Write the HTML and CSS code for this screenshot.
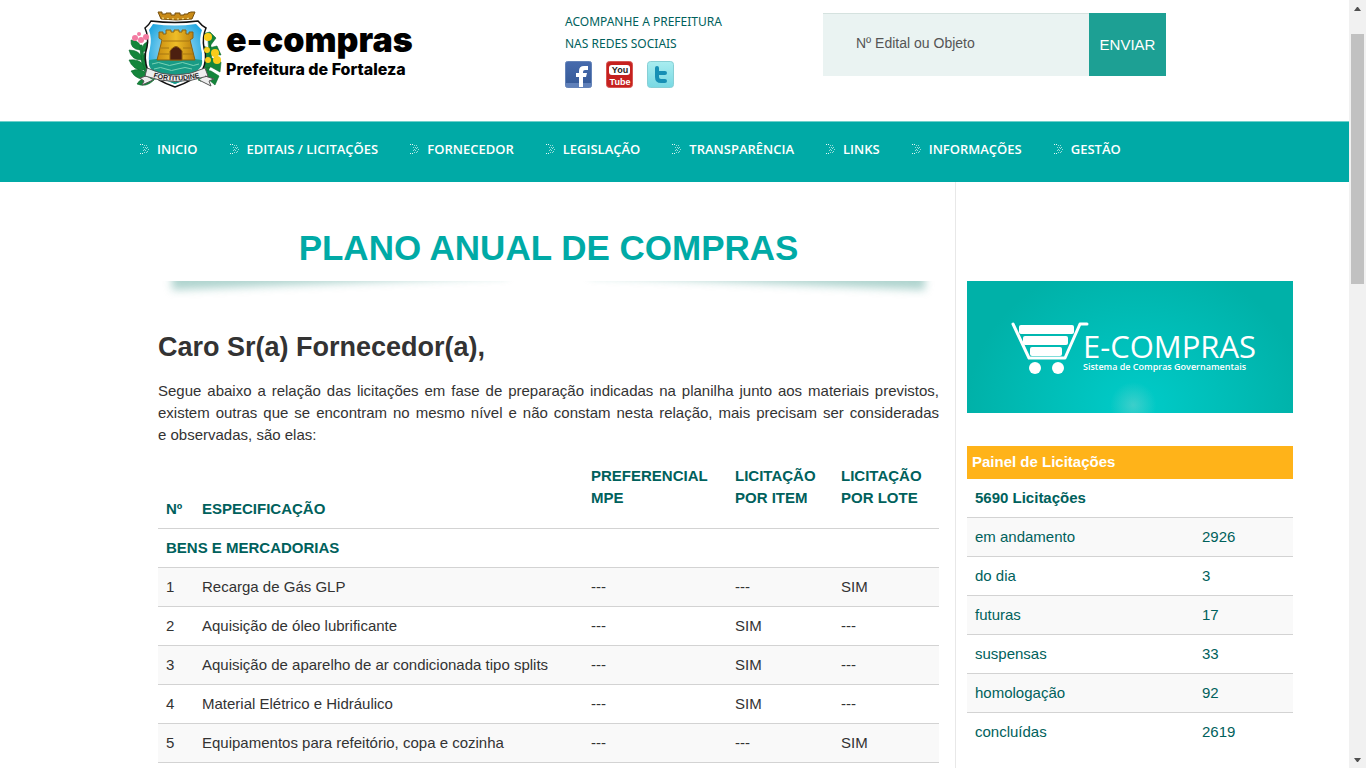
FILE: index.html
```html
<!DOCTYPE html>
<html lang="pt-BR">
<head>
<meta charset="utf-8">
<title>e-compras - Prefeitura de Fortaleza</title>
<link rel="stylesheet" href="styles.css">
</head>
<body>
<svg class="defs" aria-hidden="true">
  <symbol id="arrow" viewBox="0 0 10 11">
    <path d="M0 0h1v1h-1zM2 0h1v1h-1zM0 9h1v1h-1zM2 9h1v1h-1z" opacity=".9"/>
    <path d="M4 1h1v1h-1zM6 1h1v1h-1zM5 3h1v1h-1zM7 3h1v1h-1zM3 3h1v1h-1zM4 5h1v1h-1zM6 4h1v1h-1zM8 5h1v1h-1zM3 6h1v1h-1zM5 6h1v1h-1zM7 7h1v1h-1zM4 8h1v1h-1zM6 8h1v1h-1z" opacity=".6"/>
  </symbol>
</svg>
<div class="shell">
  <div class="page">
    <header class="header">
      <a class="brand" href="#">
        <svg class="crest" viewBox="0 0 94 80" aria-hidden="true">
          <defs>
            <radialGradient id="sky" cx=".5" cy=".45" r=".6"><stop offset="0" stop-color="#c5ecf8"/><stop offset="1" stop-color="#1fa6e0"/></radialGradient>
            <linearGradient id="gold" x1="0" x2="1"><stop offset="0" stop-color="#c98c10"/><stop offset=".5" stop-color="#eebd27"/><stop offset="1" stop-color="#b97c0c"/></linearGradient>
          </defs>
          <g fill="#14853b" stroke="#0c6a2c" stroke-width=".6">
            <path d="M23 70Q12 61 12 35L14 35Q17 58 28 69z"/>
            <path d="M12 40Q2 39 3 30Q14 31 12 40M14 42Q13 32 23 31Q23 41 14 42M14 50Q3 50 1 40Q13 40 14 50M16 50Q14 40 25 39Q25 49 16 50M17 60Q5 61 1 50Q15 48 17 60M19 60Q16 50 25 47Q28 57 19 60M22 68Q9 72 3 61Q15 56 22 68M26 70Q18 78 9 74Q14 65 26 70"/>
            <path d="M70 70Q84 58 80 30L82 30Q88 58 73 71z"/>
            <path d="M81 29L74 24L82 22L88 28L82 36zM81 38L71 35L72 44L78 48L84 44L93 45L89 36zM79 48L70 50L74 59L83 57L92 62L93 52L84 48zM77 60L70 63L72 71L80 69L87 75L91 66L83 61z"/>
          </g>
          <path d="M23 11Q47 14 70 11Q74 16 78 18Q74 27 76 38Q80 49 74 61Q65 71 47 77Q29 71 20 61Q15 48 19 37Q21 27 17 18Q21 15 23 11z" fill="#fff" stroke="#111" stroke-width="1.5"/>
          <path d="M25 14Q47 17 68 14L74 20Q71 28 73 38Q76 49 71 58Q63 68 47 74Q31 68 23 58Q19 49 22 38Q24 28 21 20z" fill="url(#sky)"/>
          <path d="M21 50Q47 45 74 50Q75 55 71 59Q62 69 47 74Q32 69 23 59Q20 55 21 50z" fill="#199b85"/>
          <path d="M24 54q7-3 12 0t12 0t12 0t11 0M26 59q7-3 12 0t12 0t14 0" fill="none" stroke="#79d2b5"/>
          <path d="M29 50L34 30L31 28V22H35V24H38V20H43V22H46V20H51V22H54V20H58V24H61V22H65V28L62 30L67 50z" fill="url(#gold)" stroke="#8a6110"/>
          <path d="M42 50V41Q48 32 54 41V50z" fill="#4c1f10" stroke="#8a5a0c"/>
          <path d="M35 31H61M33 38H41M55 38H63M31 44H41M55 44H65" stroke="#a67612"/>
          <path d="M30 2H34V4H38V3H43V5H47V3H52V5H56V4H60V3L63 2H67L64 9Q48 11 33 9z" fill="#c98b18" stroke="#76500f"/>
          <path d="M34 8Q48 10 63 8" stroke="#fff0a0" fill="none" stroke-dasharray="2 3"/>
          <path d="M19 58Q47 72 77 58L80 66Q47 77 17 66zM18 66L12 68L16 71L14 75L25 70M77 66L86 69L81 71L83 76L71 70" fill="#eee" stroke="#555"/>
          <path id="ribbon" d="M18 65Q48 76 79 65" fill="none"/>
          <text class="motto"><textPath href="#ribbon" startOffset="50%" text-anchor="middle">FORTITUDINE</textPath></text>
          <g fill="#f37ba2"><circle cx="7" cy="28" r="3"/><circle cx="11" cy="24" r="2"/><circle cx="18" cy="27" r="3"/><circle cx="13" cy="30" r="3"/></g>
          <g fill="#f8cc1b"><circle cx="80" cy="27" r="4"/><circle cx="87" cy="43" r="4"/><circle cx="79" cy="40" r="3"/><circle cx="89" cy="50" r="4"/><circle cx="80" cy="50" r="3"/></g>
        </svg>
        <span class="brand-text"><strong>e-compras</strong><b>Prefeitura de Fortaleza</b></span>
      </a>
      <section class="social">
        <p>ACOMPANHE A PREFEITURA<br>NAS REDES SOCIAIS</p>
        <div class="social-links">
          <a href="#" aria-label="Facebook"><svg viewBox="0 0 27 27"><defs><linearGradient id="fb" x2="0" y2="1"><stop stop-color="#476bad"/><stop offset="1" stop-color="#345895"/></linearGradient></defs><rect width="26" height="26" x=".5" y=".5" rx="2" fill="url(#fb)" stroke="#6483b8"/><path d="M1 22H26V26H1z" fill="#5f80b9"/><path d="M14 26V16H11V12H14V10Q14 5 19 5H23V9H20Q18 9 18 11V12H22L21 16H18V26z" fill="#fff"/></svg></a>
          <a href="#" aria-label="YouTube"><svg viewBox="0 0 27 27"><rect width="26" height="26" x=".5" y=".5" rx="3" fill="#c5211f" stroke="#d65552"/><rect x="3" y="4" width="21" height="10" rx="3" fill="#fff"/><text class="yt yt-top" x="14" y="12" text-anchor="middle">You</text><text class="yt" x="14" y="24" text-anchor="middle">Tube</text></svg></a>
          <a href="#" aria-label="Twitter"><svg viewBox="0 0 27 27"><defs><linearGradient id="tw" x2="0" y2="1"><stop stop-color="#a9edf0"/><stop offset="1" stop-color="#78d8e3"/></linearGradient></defs><rect width="26" height="26" x=".5" y=".5" rx="3" fill="url(#tw)" stroke="#87cfd5"/><path d="M10 7V16Q10 20 14 20H18M10 12H18" fill="none" stroke="#168fb5" stroke-width="4" stroke-linecap="round"/></svg></a>
        </div>
      </section>
      <form class="search">
        <input type="text" placeholder="Nº Edital ou Objeto" aria-label="Nº Edital ou Objeto">
        <button type="button">ENVIAR</button>
      </form>
    </header>
    <nav class="nav">
      <a href="#"><svg><use href="#arrow"/></svg>INICIO</a>
      <a href="#"><svg><use href="#arrow"/></svg>EDITAIS / LICITAÇÕES</a>
      <a href="#"><svg><use href="#arrow"/></svg>FORNECEDOR</a>
      <a href="#"><svg><use href="#arrow"/></svg>LEGISLAÇÃO</a>
      <a href="#"><svg><use href="#arrow"/></svg>TRANSPARÊNCIA</a>
      <a href="#"><svg><use href="#arrow"/></svg>LINKS</a>
      <a href="#"><svg><use href="#arrow"/></svg>INFORMAÇÕES</a>
      <a href="#"><svg><use href="#arrow"/></svg>GESTÃO</a>
    </nav>
    <div class="columns">
      <main class="content">
        <h1>PLANO ANUAL DE COMPRAS</h1>
        <svg class="divider" viewBox="0 0 782 20" preserveAspectRatio="none" aria-hidden="true">
          <defs><filter id="soft" x="-10%" y="-100%" width="120%" height="300%"><feGaussianBlur stdDeviation="4"/></filter></defs>
          <path d="M14 -12H350V-5L14 9z M768 -12H432V-5L768 9z" fill="#85bdb5" opacity=".65" filter="url(#soft)"/>
        </svg>
        <h2>Caro Sr(a) Fornecedor(a),</h2>
        <p class="intro">Segue abaixo a relação das licitações em fase de preparação indicadas na planilha junto aos materiais previstos, existem outras que se encontram no mesmo nível e não constam nesta relação, mais precisam ser consideradas e&nbsp;observadas, são elas:</p>
        <table class="plan">
          <colgroup><col class="c-num"><col><col class="c-mpe"><col class="c-lic"><col class="c-lic"></colgroup>
          <thead><tr><th>Nº</th><th>ESPECIFICAÇÃO</th><th><p>PREFERENCIAL MPE</p></th><th><p>LICITAÇÃO POR ITEM</p></th><th><p>LICITAÇÃO POR LOTE</p></th></tr></thead>
          <tbody>
            <tr><th colspan="5">BENS E MERCADORIAS</th></tr>
            <tr><td>1</td><td>Recarga de Gás GLP</td><td>---</td><td>---</td><td>SIM</td></tr>
            <tr><td>2</td><td>Aquisição de óleo lubrificante</td><td>---</td><td>SIM</td><td>---</td></tr>
            <tr><td>3</td><td>Aquisição de aparelho de ar condicionada tipo splits</td><td>---</td><td>SIM</td><td>---</td></tr>
            <tr><td>4</td><td>Material Elétrico e Hidráulico</td><td>---</td><td>SIM</td><td>---</td></tr>
            <tr><td>5</td><td>Equipamentos para refeitório, copa e cozinha</td><td>---</td><td>---</td><td>SIM</td></tr>
            <tr class="tail"><td colspan="5"></td></tr>
          </tbody>
        </table>
      </main>
      <aside class="sidebar">
        <a class="banner" href="#">
          <svg class="cart" viewBox="0 0 78 54" aria-hidden="true"><path d="M2 2L18 36H54L69 2H76" fill="none" stroke="#fff" stroke-width="3" stroke-linecap="round" stroke-linejoin="round"/><g fill="#fff"><rect x="8" y="3" width="55" height="9" rx="2"/><rect x="12" y="14" width="45" height="9" rx="2"/><rect x="19" y="25" width="32" height="9" rx="2"/><circle cx="24" cy="46" r="6"/><circle cx="47" cy="46" r="6"/></g></svg>
          <span class="banner-text"><span>E-COMPRAS</span><small>Sistema de Compras Governamentais</small></span>
        </a>
        <h3>Painel de Licitações</h3>
        <table class="panel">
          <colgroup><col><col class="c-count"></colgroup>
          <tbody>
            <tr><th colspan="2">5690 Licitações</th></tr>
            <tr><td>em andamento</td><td>2926</td></tr>
            <tr><td>do dia</td><td>3</td></tr>
            <tr><td>futuras</td><td>17</td></tr>
            <tr><td>suspensas</td><td>33</td></tr>
            <tr><td>homologação</td><td>92</td></tr>
            <tr><td>concluídas</td><td>2619</td></tr>
          </tbody>
        </table>
      </aside>
    </div>
  </div>
  <div class="scrollbar" aria-hidden="true">
    <svg viewBox="0 0 17 17"><path d="M5 11L8 7H9L12 11z"/></svg>
    <div class="thumb"></div>
    <svg class="down" viewBox="0 0 17 17"><path d="M5 7H12L9 11H8z"/></svg>
  </div>
</div>
</body>
</html>
```
FILE: styles.css
```css
* { box-sizing: border-box; }
body {
  margin: 0;
  font: 15px/22px "Liberation Sans", Arial, sans-serif;
  color: #333;
  background: #fff;
}
a { color: inherit; text-decoration: none; }
p, h1, h2, h3 { margin: 0; }
.defs { display: none; }
.shell { display: flex; height: 100vh; overflow: hidden; }
.page { flex: 1; min-width: 0; }

.header { display: flex; align-items: flex-start; height: 121px; padding-left: 128px; }
.brand { display: flex; width: 437px; padding-top: 10px; color: #000; }
.crest { width: 94px; height: 80px; flex: none; }
.motto { font: 700 7px "Liberation Sans", Arial, sans-serif; fill: #222; }
.brand-text { display: flex; flex-direction: column; padding: 12px 0 0 4px; font-family: Inter, "Liberation Sans", sans-serif; font-weight: 900; white-space: nowrap; }
.brand-text strong { font-size: 34px; line-height: 36px; font-weight: 900; }
.brand-text b { font-size: 16px; line-height: 22px; font-weight: 800; }
.social { width: 258px; padding-top: 11px; color: #00615c; font: 12px/22px "Noto Sans", "Open Sans", sans-serif; }
.social-links { display: flex; gap: 14px; padding-top: 6px; }
.social-links svg { display: block; width: 27px; height: 27px; }
.yt { font: 700 9px "Liberation Sans", Arial, sans-serif; fill: #fff; }
.yt-top { fill: #222; }
.search { display: flex; width: 343px; height: 63px; margin-top: 13px; }
.search input {
  flex: 1; min-width: 0; padding: 0 33px 4px; border: 0; border-top: 1px solid #d5e2df;
  background: #eaf3f2; font: 14px "Liberation Sans", Arial, sans-serif; color: #555;
}
.search input::placeholder { color: #555; opacity: 1; }
.search button {
  width: 77px; border: 0; padding: 0; background: #1da094; color: #fff;
  font: 15px "Liberation Sans", Arial, sans-serif;
}

.nav {
  display: flex; gap: 32px; height: 61px; padding: 16px 0 0 140px;
  border-top: 1px solid #6fd0cb; background: #00aaa6; color: #fff;
  font: 600 13px/22px "Open Sans", "Noto Sans", sans-serif; white-space: nowrap;
}
.nav a { display: flex; align-items: center; gap: 7px; height: 22px; }
.nav svg { width: 10px; height: 11px; fill: #fff; }

.columns { display: flex; min-height: 600px; }
.content { flex: 1; min-width: 0; padding: 46px 16px 0 158px; }
.content h1 { font-size: 35px; line-height: 40px; color: #00aaa6; text-align: center; }
.divider { display: block; width: 100%; height: 20px; margin-top: 13px; overflow: hidden; }
.content h2 { margin-top: 24px; font-size: 27px; line-height: 44px; }
.intro { margin: 11px 0; text-align: justify; }
table { border-collapse: separate; border-spacing: 0; table-layout: fixed; width: 100%; }
th, td { padding: 8px; text-align: left; }
th { color: #00615c; vertical-align: bottom; }
th p { margin-bottom: 11px; }
tr + tr > *, tbody tr:first-child > * { border-top: 1px solid #d3d3d3; }
tbody tr:nth-child(even) > * { background: #f9f9f9; }
.plan .tail td { background: none; }
.c-num { width: 36px; }
.c-mpe { width: 144px; }
.c-lic { width: 106px; }

.sidebar { width: 394px; padding: 99px 56px 0 11px; border-left: 1px solid #e8e8e8; }
.banner {
  display: flex; height: 132px; padding: 41px 0 0 44px; color: #fff;
  background:
    radial-gradient(circle at 51% 94%, rgba(120, 210, 205, .5), rgba(120, 210, 205, 0) 23px),
    radial-gradient(ellipse 170px 150px at 52% 96%, #00ccc9, #00b1a8);
  font-family: "Open Sans", "Noto Sans", sans-serif;
}
.cart { flex: none; width: 78px; height: 54px; }
.banner-text { display: flex; flex-direction: column; padding-top: 8px; margin-left: -6px; white-space: nowrap; }
.banner-text > span { font-size: 31px; line-height: 32px; }
.banner-text small { font-size: 9px; line-height: 10px; font-weight: 600; }
.sidebar h3 { margin-top: 33px; padding: 5px 5px 6px; background: #ffb319; color: #fff; font-size: 15px; line-height: 22px; }
.panel { color: #00615c; }
.panel tr:first-child > * { border-top: 0; }
.c-count { width: 99px; }

.scrollbar { display: flex; flex-direction: column; width: 17px; background: #f1f1f1; }
.scrollbar svg { width: 17px; height: 17px; fill: #505050; }
.thumb { height: 250px; margin: 17px 2px 0; background: #c1c1c1; }
.scrollbar .down { margin-top: auto; }
```
